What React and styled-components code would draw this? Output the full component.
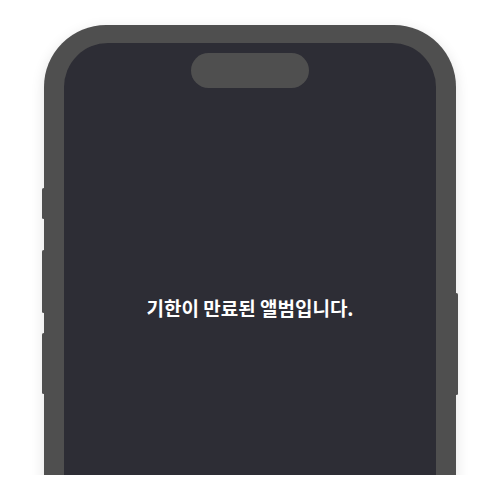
import React from 'react';
import styled, { createGlobalStyle } from 'styled-components';

const GlobalStyle = createGlobalStyle`
  html, body {
    margin: 0;
    padding: 0;
    background: #ffffff;
  }
  body {
    font-family: "Noto Sans CJK KR", "Noto Sans", sans-serif;
  }
`;

export const Stage = styled.div`
  width: 500px;
  height: 475px;
  overflow: hidden;
  display: flex;
  justify-content: center;
  padding-top: 25px;
  box-sizing: border-box;
`;

export const Phone = styled.div`
  position: relative;
  width: 412px;
  height: 568px;
  flex-shrink: 0;
  box-sizing: border-box;
  padding: 18px 20px;
  background: #4f4f4f;
  border-radius: 62px;
  box-shadow: 0 4px 14px rgba(0, 0, 0, 0.12);
`;

// buttons sticking out of the frame edges
export const ButtonRail = styled.div`
  position: absolute;
  top: ${(p) => p.top}px;
  ${(p) => (p.right ? 'right: -2px;' : 'left: -2px;')}
  display: flex;
  flex-direction: column;
`;

export const SideButton = styled.span`
  display: block;
  width: 3px;
  height: ${(p) => p.height}px;
  background: #4f4f4f;
  border-radius: 2px;
  margin-top: ${(p) => p.offset || 0}px;
`;

export const Screen = styled.div`
  height: 100%;
  box-sizing: border-box;
  padding: 10px 0 49px;
  background: #2d2d35;
  border-radius: 44px;
  display: flex;
  flex-direction: column;
  align-items: center;
`;

export const Island = styled.div`
  width: 118px;
  height: 35px;
  flex-shrink: 0;
  border-radius: 18px;
  background: #4f4f4f;
`;

export const Body = styled.div`
  flex: 1;
  display: flex;
  align-items: center;
  justify-content: center;
`;

export const Message = styled.p`
  margin: 0;
  color: #ffffff;
  font-size: 19px;
  font-weight: 700;
  letter-spacing: 0;
`;

export default function App() {
  return (
    <>
      <GlobalStyle />
      <Stage>
        <Phone>
          <ButtonRail top={163}>
            <SideButton height={31} />
            <SideButton height={63} offset={31} />
            <SideButton height={61} offset={20} />
          </ButtonRail>
          <ButtonRail right top={268}>
            <SideButton height={102} />
          </ButtonRail>
          <Screen>
            <Island />
            <Body>
              <Message>기한이 만료된 앨범입니다.</Message>
            </Body>
          </Screen>
        </Phone>
      </Stage>
    </>
  );
}
